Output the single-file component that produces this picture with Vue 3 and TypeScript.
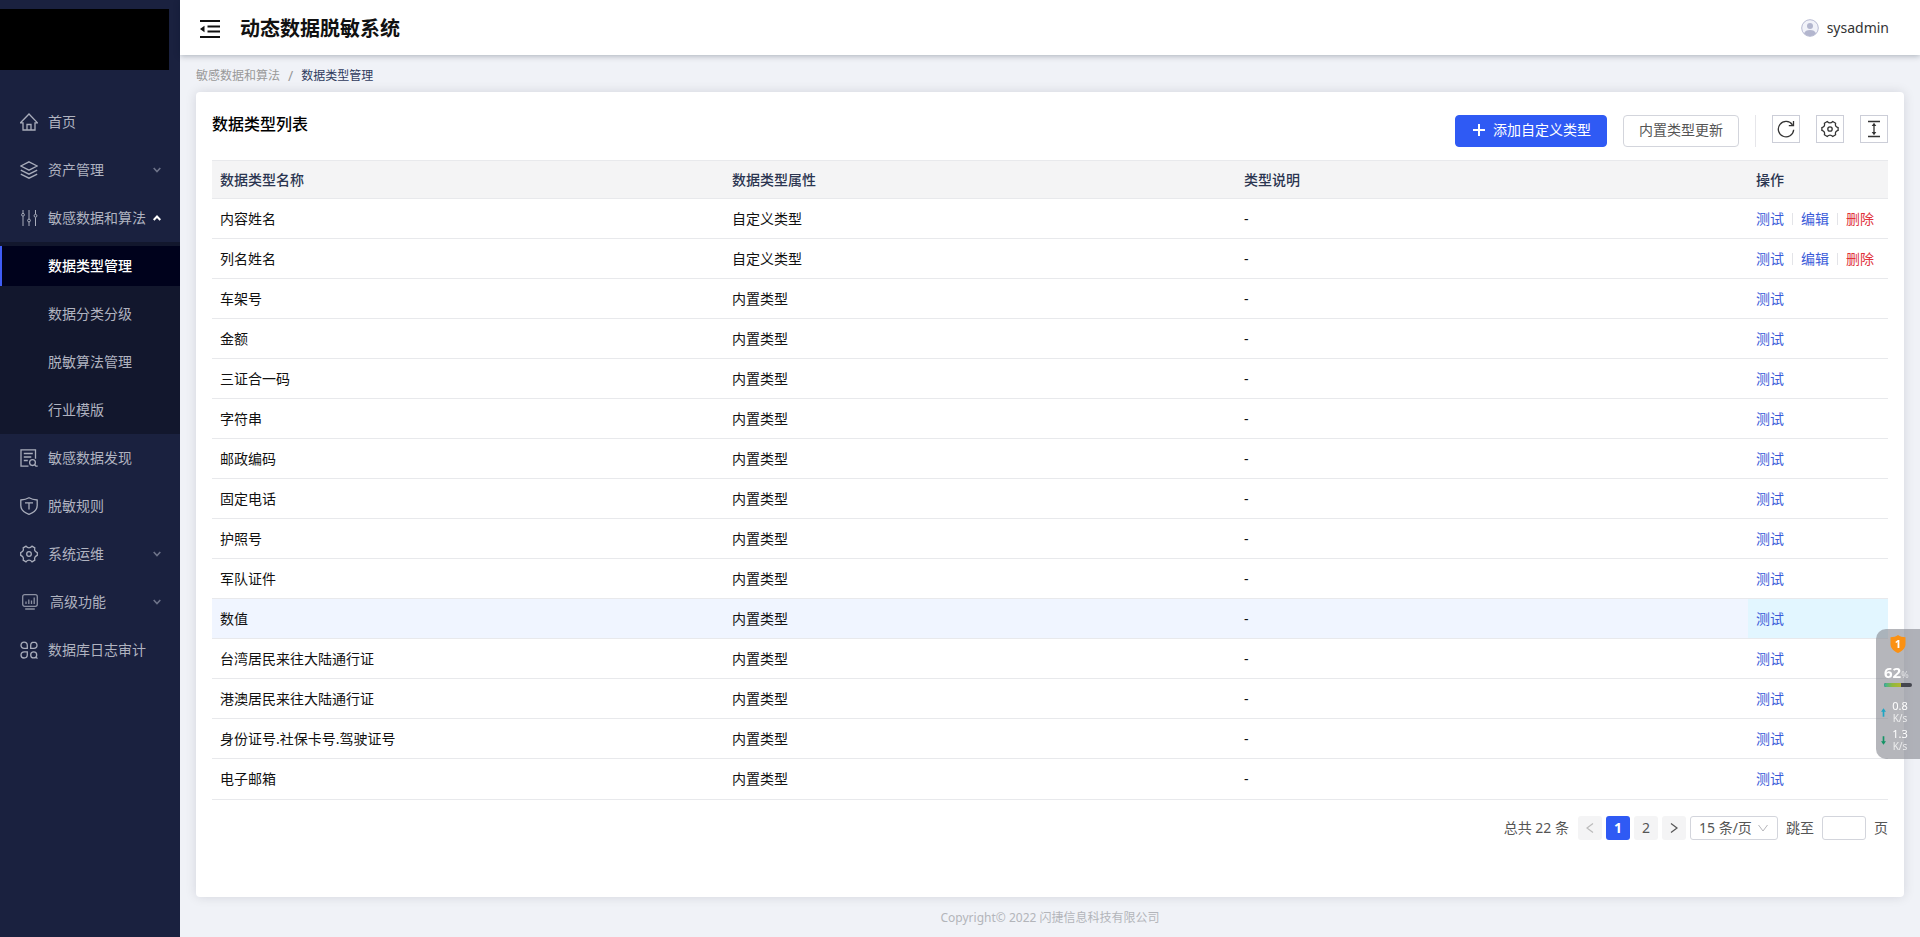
<script setup lang="ts">
import { ref } from 'vue'

interface MenuEntry {
  icon: string
  label: string
  arrow?: boolean
  small?: boolean
}
interface TypeRow {
  name: string
  custom?: boolean
}

const topMenu: MenuEntry[] = [
  { icon: 'home', label: '首页' },
  { icon: 'layers', label: '资产管理', arrow: true },
]
const subMenu: string[] = ['数据类型管理', '数据分类分级', '脱敏算法管理', '行业模版']
const bottomMenu: MenuEntry[] = [
  { icon: 'search-doc', label: '敏感数据发现' },
  { icon: 'shield', label: '脱敏规则' },
  { icon: 'gear', label: '系统运维', arrow: true },
  { icon: 'chart', label: '高级功能', arrow: true, small: true },
  { icon: 'clover', label: '数据库日志审计' },
]
const rows: TypeRow[] = [
  { name: '内容姓名', custom: true },
  { name: '列名姓名', custom: true },
  { name: '车架号' },
  { name: '金额' },
  { name: '三证合一码' },
  { name: '字符串' },
  { name: '邮政编码' },
  { name: '固定电话' },
  { name: '护照号' },
  { name: '军队证件' },
  { name: '数值' },
  { name: '台湾居民来往大陆通行证' },
  { name: '港澳居民来往大陆通行证' },
  { name: '身份证号.社保卡号.驾驶证号' },
  { name: '电子邮箱' },
]
const highlighted = ref('数值')
const pageSize = ref('15')
const jumpTo = ref('')
</script>

<template>
  <div class="layout">
    <aside class="sidebar">
      <div class="logo"></div>
      <nav class="menu">
        <component
          :is="m.arrow ? 'button' : 'a'"
          v-for="m in topMenu"
          :key="m.label"
          :href="m.arrow ? undefined : '#'"
          class="item"
        >
          <svg v-if="m.icon === 'home'" class="icon" viewBox="0 0 18 18">
            <path d="M.5 9.800 9 1l8.500 8.800H15V17H3V9.800ZM7 17v-5.500h4V17" />
          </svg>
          <svg v-else class="icon" viewBox="0 0 18 18">
            <path d="M9 .8 17.200 5 9 9.200.8 5ZM.8 9.200 9 13.200l8.200-4M.8 13.200l8.200 4 8.200-4" />
          </svg>
          <span>{{ m.label }}</span>
          <svg v-if="m.arrow" class="arrow" viewBox="0 0 8 6"><path d="M.7 1 4 4.500 7.300 1" /></svg>
        </component>

        <button class="item">
          <svg class="icon thin" viewBox="0 0 18 18">
            <path d="M3 1v3.200M3 7.400V17M9 1v9M9 13v4M15.500 1v4.200M15.500 8.400V17" />
            <circle cx="3" cy="5.800" r="1.400" />
            <circle cx="9" cy="11.500" r="1.400" />
            <circle cx="15.500" cy="6.800" r="1.400" />
          </svg>
          <span>敏感数据和算法</span>
          <svg class="arrow open" viewBox="0 0 8 6"><path d="M.7 5 4 1.500 7.300 5" /></svg>
        </button>
        <div class="submenu">
          <a v-for="(s, i) in subMenu" :key="s" href="#" class="subitem" :class="{ active: i === 0 }">{{ s }}</a>
        </div>

        <component
          :is="m.arrow ? 'button' : 'a'"
          v-for="m in bottomMenu"
          :key="m.label"
          :href="m.arrow ? undefined : '#'"
          class="item"
          :class="{ inset: m.small }"
        >
          <svg v-if="m.icon === 'search-doc'" class="icon" viewBox="0 0 18 18">
            <path d="M8.500 17.200H1V.8h14.500v9M3.800 4.500h9M3.800 8h7.500M3.800 11.500h4M14.700 15.800l1.200 1.300h1.800" />
            <circle cx="12.500" cy="13.600" r="2.900" />
          </svg>
          <svg v-else-if="m.icon === 'shield'" class="icon" viewBox="0 0 18 18">
            <path d="M9 .8c2.400 1.400 5 2 8.200 2.200v5.500c0 4.200-3.200 7-8.200 8.800C4 15.500.8 12.700.8 8.500V3C4 2.800 6.600 2.200 9 .8ZM5 5.800h8M9 5.800v6.700" />
          </svg>
          <svg v-else-if="m.icon === 'gear'" class="icon" viewBox="0 0 18 18">
            <path d="M6 1.200Q7.500 2.800 9 2.800t3-1.600l2.800 1.700q-.5 2 .2 3t2.300 1.700v2.800q-1.600.7-2.300 1.700t-.2 3L12 16.800Q10.500 15.200 9 15.200t-3 1.600l-2.800-1.700q.5-2-.2-3T.7 10.400V7.600Q2.300 6.900 3 5.900t.2-3Z" />
            <circle cx="9" cy="9" r="2.300" />
          </svg>
          <svg v-else-if="m.icon === 'chart'" class="icon small" viewBox="0 0 16 16">
            <rect x=".7" y=".7" width="14.600" height="11.600" rx="2" />
            <path d="M4 7.500V10M6.800 5.500V10M9.500 6.500V10M12.200 3.500V10M3.200 15h9.600" />
          </svg>
          <svg v-else class="icon" viewBox="0 0 18 18">
            <path d="M4 1.200c2 0 3.300 1.200 3.300 3.200v2.900H4.200C2.200 7.300 1 6 1 4.200S2.200 1.200 4 1.200ZM14 1.200c-2 0-3.300 1.200-3.300 3.200v2.900h3.100c2 0 3.200-1.300 3.200-3.100s-1.200-3-3-3ZM4 17c2 0 3.300-1.200 3.300-3.200v-2.900H4.200C2.200 10.900 1 12.200 1 14s1.200 3 3 3ZM15.500 16l2 1.500" />
            <circle cx="13.700" cy="13.900" r="3" />
          </svg>
          <span>{{ m.label }}</span>
          <svg v-if="m.arrow" class="arrow" viewBox="0 0 8 6"><path d="M.7 1 4 4.500 7.300 1" /></svg>
        </component>
      </nav>
    </aside>

    <div class="main">
      <header class="topbar">
        <button class="fold" aria-label="收起菜单">
          <svg viewBox="0 0 20 18">
            <path d="M0 1h20M7.500 6.500H20M7.500 11.500H20M0 17h20" fill="none" stroke="#111" stroke-width="2" />
            <path d="M0 9l4.500-3.300v6.600Z" fill="#111" />
          </svg>
        </button>
        <h1>动态数据脱敏系统</h1>
        <button class="user">
          <svg viewBox="0 0 18 18">
            <circle cx="9" cy="9" r="8.300" fill="#f1f2f9" stroke="#b7bad2" stroke-width="1" />
            <circle cx="9" cy="7" r="3" fill="#b3b6ce" />
            <path d="M3 14.600c.8-2.700 3-3.700 6-3.700s5.200 1 6 3.700A8.300 8.300 0 0 1 9 17.300a8.300 8.300 0 0 1-6-2.700Z" fill="#b3b6ce" />
          </svg>
          <span>sysadmin</span>
        </button>
      </header>

      <nav class="crumbs">
        <a href="#">敏感数据和算法</a>
        <span class="slash">/</span>
        <span class="here">数据类型管理</span>
      </nav>

      <main class="card">
        <div class="toolbar">
          <h2>数据类型列表</h2>
          <button class="btn primary">
            <svg viewBox="0 0 12 12"><path d="M6 0v12M0 6h12" /></svg>
            <span>添加自定义类型</span>
          </button>
          <button class="btn">内置类型更新</button>
          <span class="rule"></span>
          <button class="tool" aria-label="刷新">
            <svg viewBox="0 0 18 18"><path d="M15.400 4.800A7.700 7.700 0 1 0 16.700 9.800M16.500 1v4.700h-4.700" /></svg>
          </button>
          <button class="tool" aria-label="列设置">
            <svg viewBox="0 0 18 18">
              <path d="M6.200 1.500Q7.600 2.900 9 2.900t2.800-1.400l2.800 1.700q-.5 1.900.2 2.900t2.300 1.500v2.800q-1.600.5-2.300 1.500t-.2 2.900l-2.800 1.700Q10.400 15.100 9 15.100t-2.800 1.400l-2.800-1.700q.5-1.900-.2-2.900T.9 10.400V7.600q1.600-.5 2.300-1.500t.2-2.900Z" />
              <circle cx="9" cy="9" r="2.200" />
            </svg>
          </button>
          <button class="tool" aria-label="行高">
            <svg viewBox="0 0 18 18">
              <path d="M3 1.500h12M3 16.500h12M9 4v10" />
              <path d="M9 2.800l2.300 3.200H6.700ZM9 15.200l2.300-3.200H6.700Z" fill="#333" stroke="none" />
            </svg>
          </button>
        </div>

        <table>
          <colgroup><col /><col /><col /><col class="ops" /></colgroup>
          <thead>
            <tr><th>数据类型名称</th><th>数据类型属性</th><th>类型说明</th><th>操作</th></tr>
          </thead>
          <tbody>
            <tr v-for="r in rows" :key="r.name" :class="{ hot: r.name === highlighted }">
              <td>{{ r.name }}</td>
              <td>{{ r.custom ? '自定义类型' : '内置类型' }}</td>
              <td>-</td>
              <td>
                <div class="links">
                  <a href="#">测试</a>
                  <template v-if="r.custom">
                    <a href="#">编辑</a>
                    <a href="#" class="danger">删除</a>
                  </template>
                </div>
              </td>
            </tr>
          </tbody>
        </table>

        <div class="pager">
          <span class="total">总共 22 条</span>
          <button class="page off" aria-label="上一页" disabled>
            <svg viewBox="0 0 8 12"><path d="M7 1.500 1 6l6 4.500" /></svg>
          </button>
          <button class="page current">1</button>
          <button class="page">2</button>
          <button class="page" aria-label="下一页">
            <svg viewBox="0 0 8 12"><path d="M1 1.500 7 6l-6 4.500" /></svg>
          </button>
          <span class="size">
            <select v-model="pageSize" aria-label="每页条数">
              <option value="15">15 条/页</option>
              <option value="30">30 条/页</option>
            </select>
            <svg viewBox="0 0 10 8"><path d="M.5 1 5 7l4.500-6" /></svg>
          </span>
          <label for="jump">跳至</label>
          <input id="jump" v-model="jumpTo" type="text" />
          <span>页</span>
        </div>
      </main>

      <footer class="footer">Copyright© 2022 闪捷信息科技有限公司</footer>
    </div>

    <section class="monitor">
      <svg class="badge" viewBox="0 0 16 18">
        <path d="M8 0c2 1.500 4.500 2.200 7.500 2.300V9c0 4-2.800 7-7.500 9C3.300 16 .5 13 .5 9V2.300C3.500 2.200 6 1.500 8 0Z" fill="#fb9113" />
        <text x="8" y="13" text-anchor="middle">1</text>
      </svg>
      <div class="load"><b>62</b><small>%</small></div>
      <div class="bar"><span></span></div>
      <div class="rate up">
        <svg viewBox="0 0 6 10"><path d="M3 0l3 4H4v6H2V4H0Z" /></svg>
        <p>0.8<small>K/s</small></p>
      </div>
      <div class="rate down">
        <svg viewBox="0 0 6 10"><path d="M3 10l3-4H4V0H2v6H0Z" /></svg>
        <p>1.3<small>K/s</small></p>
      </div>
    </section>
  </div>
</template>

<style>
body {
  margin: 0;
}
</style>

<style scoped>
* {
  box-sizing: border-box;
}
.layout {
  display: flex;
  min-height: 100vh;
  background: #f0f2f7;
  font: 14px/20px "Noto Sans", "Noto Sans CJK SC", sans-serif;
  color: #111;
}
button,
input,
select {
  font: inherit;
  color: inherit;
  margin: 0;
  padding: 0;
  border: 0;
  background: none;
}
a {
  color: inherit;
  text-decoration: none;
}
h1,
h2,
p {
  margin: 0;
}
svg {
  display: block;
  flex: none;
}
.sidebar {
  flex: none;
  width: 180px;
  background: #1a213f;
}
.logo {
  width: 169px;
  height: 61px;
  margin-top: 9px;
  background: #000;
}
.menu {
  margin-top: 28px;
  color: #b0b3c0;
}
.item {
  display: flex;
  align-items: center;
  width: 100%;
  height: 48px;
  padding: 0 19px 0 20px;
  gap: 10px;
  text-align: left;
}
.item span {
  flex: 1;
  min-width: 0;
  white-space: nowrap;
}
.icon {
  width: 18px;
  height: 18px;
  fill: none;
  stroke: #a9adbb;
  stroke-width: 1.3;
}
.icon.thin {
  stroke-width: 1;
}
.icon.small {
  width: 16px;
  height: 16px;
  opacity: 0.8;
}
.inset {
  padding-left: 22px;
  gap: 12px;
}
.arrow {
  width: 8px;
  height: 6px;
  margin-left: -8px;
  fill: none;
  stroke: #6d7389;
  stroke-width: 1.6;
}
.arrow.open {
  stroke: #fff;
  stroke-width: 2;
}
.submenu {
  padding: 4px 0;
  background: #12172d;
}
.subitem {
  display: block;
  height: 40px;
  margin-bottom: 8px;
  padding-left: 48px;
  line-height: 40px;
}
.subitem:last-child {
  margin-bottom: 0;
}
.subitem.active {
  padding-left: 46px;
  border-left: 2px solid #3f5cf5;
  background: #00021c;
  color: #fff;
  font-weight: 500;
}
.main {
  flex: 1;
  min-width: 0;
  display: flex;
  flex-direction: column;
}
.topbar {
  position: relative;
  display: flex;
  align-items: center;
  height: 55px;
  padding: 2px 31px 0 20px;
  background: #fff;
  box-shadow: 0 1px 6px rgba(0, 21, 41, 0.3);
}
.fold svg {
  width: 20px;
  height: 18px;
}
h1 {
  flex: 1;
  margin-left: 20px;
  font-size: 20px;
  line-height: 28px;
  font-weight: 700;
}
.user {
  display: flex;
  align-items: center;
  gap: 8px;
  padding-bottom: 2px;
  color: #333;
}
.user svg {
  width: 18px;
  height: 18px;
}
.crumbs {
  display: flex;
  height: 37px;
  padding: 11px 16px 6px;
  gap: 8px;
  font-size: 12px;
  color: #999;
}
.crumbs .slash {
  font-size: 14px;
}
.crumbs .here {
  color: #2f3a5c;
}
.card {
  flex: 1;
  margin: 0 16px;
  padding: 16px;
  border-radius: 4px;
  background: #fff;
  box-shadow: 0 0 12px rgba(0, 10, 30, 0.12);
}
.toolbar {
  display: flex;
  align-items: flex-start;
  height: 52px;
  padding-top: 7px;
}
h2 {
  flex: 1;
  font-size: 16px;
  line-height: 18px;
  font-weight: 500;
  color: #000;
}
.btn {
  display: flex;
  align-items: center;
  height: 32px;
  margin-left: 16px;
  padding: 0 15px 2px;
  border: 1px solid #d3d5dc;
  border-radius: 4px;
  color: #555;
}
.btn.primary {
  padding: 0 15px 2px 17px;
  gap: 8px;
  border-color: #2f5af4;
  background: #2f5af4;
  color: #fff;
}
.btn svg {
  width: 12px;
  height: 12px;
  stroke: #fff;
  stroke-width: 2;
}
.rule {
  width: 1px;
  height: 32px;
  margin-left: 16px;
  background: #e6e6ea;
}
.tool {
  display: grid;
  place-items: center;
  width: 28px;
  height: 28px;
  margin-left: 16px;
  border: 1px solid #ccced8;
}
.tool svg {
  width: 18px;
  height: 18px;
  fill: none;
  stroke: #333;
  stroke-width: 1.3;
}
table {
  width: 100%;
  table-layout: fixed;
  border-collapse: separate;
  border-spacing: 0;
  color: #111;
}
.ops {
  width: 140px;
}
th,
td {
  height: 40px;
  padding: 0 8px;
  border-bottom: 1px solid #e8e9ec;
  text-align: left;
}
th {
  height: 39px;
  border-top: 1px solid #e8e9ec;
  background: #f4f4f5;
  color: #2b3550;
  font-weight: 500;
}
tbody tr:last-child td {
  height: 41px;
}
.hot td {
  background: #f0f5ff;
}
.hot td:last-child {
  background: #e2f6ff;
}
.links {
  display: flex;
  align-items: center;
  color: #3a5bd9;
}
.links a + a {
  display: flex;
  align-items: center;
}
.links a + a::before {
  content: "";
  width: 1px;
  height: 12px;
  margin: 0 8px;
  background: #e3e4e8;
}
.links .danger {
  color: #e0323c;
}
.pager {
  display: flex;
  align-items: center;
  justify-content: flex-end;
  gap: 4px;
  height: 24px;
  margin-top: 16px;
  color: #555;
}
.total {
  margin-right: 5px;
}
.page {
  display: grid;
  place-items: center;
  width: 24px;
  height: 24px;
  border-radius: 3px;
  background: #f4f4f5;
}
.page svg {
  width: 8px;
  height: 12px;
  fill: none;
  stroke: #555;
  stroke-width: 1.2;
}
.page.off svg {
  stroke: #bbb;
}
.page.current {
  background: #2f5af4;
  color: #fff;
  font-weight: 700;
}
.size {
  position: relative;
  width: 88px;
  height: 24px;
}
.size select {
  width: 100%;
  height: 24px;
  padding-left: 8px;
  border: 1px solid #d3d5dc;
  border-radius: 3px;
  appearance: none;
}
.size svg {
  position: absolute;
  top: 8px;
  right: 10px;
  width: 10px;
  height: 8px;
  fill: none;
  stroke: #b5b5ba;
  pointer-events: none;
}
.pager label {
  margin: 0 4px;
}
.pager input {
  width: 44px;
  height: 24px;
  margin-right: 4px;
  padding: 0 6px;
  border: 1px solid #d3d5dc;
  border-radius: 3px;
}
.footer {
  height: 40px;
  padding-top: 11px;
  font-size: 12px;
  text-align: center;
  color: #b3b5ba;
}
.monitor {
  position: fixed;
  right: 0;
  top: 629px;
  width: 44px;
  height: 130px;
  padding-top: 6px;
  border-radius: 10px 0 0 10px;
  background: rgba(135, 137, 146, 0.62);
  color: #fff;
  font-size: 11px;
  line-height: 12px;
}
.badge {
  width: 16px;
  height: 18px;
  margin-left: 14px;
}
.badge text {
  fill: #fff;
  font-size: 11px;
  font-weight: 700;
}
.load {
  display: flex;
  align-items: baseline;
  height: 20px;
  margin: 10px 0 0 8px;
  font-size: 15px;
  line-height: 18px;
}
.load small {
  font-size: 9px;
  opacity: 0.6;
}
.bar {
  width: 28px;
  height: 4px;
  margin-left: 8px;
  border-radius: 2px;
  background: #45464e;
  overflow: hidden;
}
.bar span {
  display: block;
  width: 62%;
  height: 4px;
  background: linear-gradient(90deg, #35b2a0, #8fb93f, #b5b52c);
}
.rate {
  display: flex;
  align-items: center;
  margin: 13px 0 0 5px;
  gap: 3px;
}
.rate.down {
  margin-top: 4px;
}
.rate svg {
  width: 5px;
  height: 9px;
  fill: #1fa6c4;
}
.rate.down svg {
  fill: #139465;
}
.rate p {
  width: 22px;
  text-align: center;
}
.rate small {
  display: block;
  font-size: 10px;
  opacity: 0.75;
}
</style>
